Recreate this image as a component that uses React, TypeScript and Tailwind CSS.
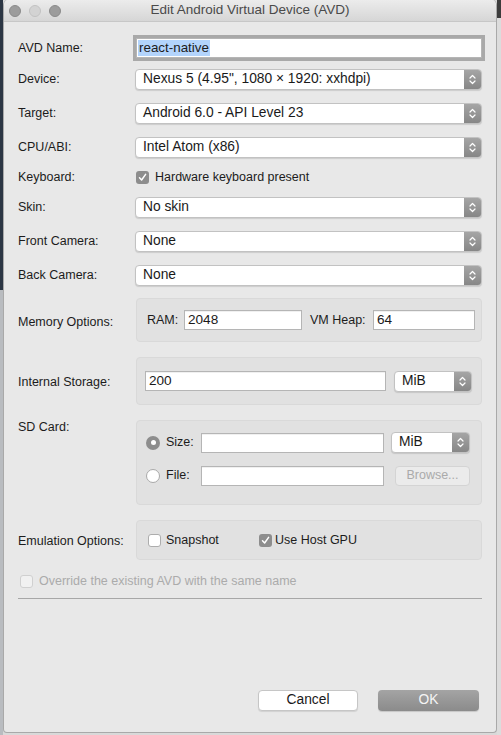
import React from "react";

const font = { fontFamily: '"Liberation Sans", Arial, sans-serif' };

function Chevrons() {
  return (
    <svg width="9" height="13" viewBox="0 0 9 13" fill="none">
      <path d="M2 5 L4.5 2.5 L7 5" stroke="white" strokeWidth="1.2" strokeLinecap="round" strokeLinejoin="round" />
      <path d="M2 8 L4.5 10.5 L7 8" stroke="white" strokeWidth="1.2" strokeLinecap="round" strokeLinejoin="round" />
    </svg>
  );
}

function Select({ value, className }: { value: string; className: string }) {
  return (
    <div
      className={`flex h-[21px] items-stretch rounded-[4px] border border-[#c2c2c2] bg-white shadow-[0_1px_1px_rgba(0,0,0,0.12)] ${className}`}
    >
      <span className="flex flex-1 items-center truncate pl-[7px] text-[13.8px] text-[#1a1a1a]">{value}</span>
      <span className="flex w-[17px] items-center justify-center rounded-r-[3px] bg-gradient-to-b from-[#a5a5a5] to-[#878787]">
        <Chevrons />
      </span>
    </div>
  );
}

function Input({ value, className }: { value?: string; className: string }) {
  return (
    <div
      className={`flex h-[20px] items-center border border-[#b5b5b5] bg-white pl-[3px] text-[13.6px] text-[#1a1a1a] shadow-[inset_0_1px_0_rgba(0,0,0,0.06)] ${className}`}
    >
      {value}
    </div>
  );
}

function Check({ checked, disabled }: { checked?: boolean; disabled?: boolean }) {
  if (checked) {
    return (
      <span className="flex h-[13px] w-[13px] items-center justify-center rounded-[3px] bg-[#8d8d8d]">
        <svg width="9" height="9" viewBox="0 0 9 9" fill="none">
          <path d="M1.5 4.8 L3.6 7 L7.6 1.4" stroke="white" strokeWidth="1.5" strokeLinecap="round" strokeLinejoin="round" />
        </svg>
      </span>
    );
  }
  return (
    <span
      className={`h-[13px] w-[13px] rounded-[3px] border ${
        disabled ? "border-[#d0d0d0] bg-[#f1f1f1]" : "border-[#adadad] bg-white"
      }`}
    />
  );
}

function Radio({ checked }: { checked?: boolean }) {
  if (checked) {
    return (
      <span className="flex h-[14px] w-[14px] items-center justify-center rounded-full bg-[#8d8d8d]">
        <span className="h-[5px] w-[5px] rounded-full bg-white" />
      </span>
    );
  }
  return <span className="h-[14px] w-[14px] rounded-full border border-[#a9a9a9] bg-white" />;
}

function Row({ label, h, children }: { label: string; h: string; children: React.ReactNode }) {
  return (
    <div className={`flex items-center ${h}`}>
      <div className="w-[117px] shrink-0">{label}</div>
      {children}
    </div>
  );
}

export default function App() {
  return (
    <div className="flex h-[735px] w-[501px] bg-[#d9d9d9] text-[12.5px] text-[#1c1c1c]" style={font}>
      <div className="flex w-[3px] flex-col">
        <div className="h-[290px] bg-[#2c3644]" />
        <div className="flex-1 bg-[#b9bcc0]" />
      </div>
      <div className="flex h-[733px] w-[494px] flex-col overflow-hidden rounded-t-[5px] rounded-b-[4px] border-x border-b border-[#a9a9a9] bg-[#e8e8e8]">
        <div className="relative flex h-[22px] shrink-0 items-center justify-center border-b border-[#c7c7c7] bg-gradient-to-b from-[#ececec] to-[#d6d6d6]">
          <div className="absolute left-[5px] top-[5px] flex gap-[8px]">
            <span className="h-[12px] w-[12px] rounded-full border border-[#8a8a8a] bg-[#9c9c9c]" />
            <span className="h-[12px] w-[12px] rounded-full border border-[#c2c2c2] bg-[#d3d3d3]" />
            <span className="h-[12px] w-[12px] rounded-full border border-[#8a8a8a] bg-[#9c9c9c]" />
          </div>
          <span className="text-[13.5px] text-[#4a4a4a]">Edit Android Virtual Device (AVD)</span>
        </div>

        <div className="flex flex-1 flex-col px-[14px] pt-[12px]">
          <Row label="AVD Name:" h="h-[28px]">
            <div className="ml-[1px] flex h-[20px] w-[347px] items-center border border-[#b5b5b5] bg-white pl-[1px] text-[13.4px] shadow-[0_0_0_3px_#a9a9a9]">
              <span className="bg-[#b3d4fc] px-[1px] leading-[16px]">react-native</span>
            </div>
          </Row>
          <Row label="Device:" h="h-[34px]">
            <Select value={'Nexus 5 (4.95", 1080 \u00d7 1920: xxhdpi)'} className="w-[349px]" />
          </Row>
          <Row label="Target:" h="h-[34px]">
            <Select value="Android 6.0 - API Level 23" className="w-[349px]" />
          </Row>
          <Row label="CPU/ABI:" h="h-[34px]">
            <Select value="Intel Atom (x86)" className="w-[349px]" />
          </Row>
          <Row label="Keyboard:" h="h-[26px]">
            <div className="flex items-center gap-[6px] pl-[1px]">
              <Check checked />
              <span>Hardware keyboard present</span>
            </div>
          </Row>
          <Row label="Skin:" h="h-[34px]">
            <Select value="No skin" className="w-[349px]" />
          </Row>
          <Row label="Front Camera:" h="h-[34px]">
            <Select value="None" className="w-[349px]" />
          </Row>
          <Row label="Back Camera:" h="h-[34px]">
            <Select value="None" className="w-[349px]" />
          </Row>

          <div className="mt-[6px] flex items-center">
            <div className="w-[118px] shrink-0 pt-[5px]">Memory Options:</div>
            <div className="flex h-[44px] w-[348px] items-center rounded-[4px] border border-[#d9d9d9] bg-[#e1e1e1] pl-[10px]">
              <span className="w-[37px]">RAM:</span>
              <Input value="2048" className="w-[118px]" />
              <span className="ml-[8px] w-[63px]">VM Heap:</span>
              <Input value="64" className="w-[102px]" />
            </div>
          </div>

          <div className="mt-[15px] flex items-center">
            <div className="w-[118px] shrink-0 pt-[2px]">Internal Storage:</div>
            <div className="flex h-[48px] w-[348px] items-center rounded-[4px] border border-[#d9d9d9] bg-[#e1e1e1] pl-[8px]">
              <Input value="200" className="w-[241px]" />
              <Select value="MiB" className="ml-[8px] w-[78px]" />
            </div>
          </div>

          <div className="mt-[15px] flex items-start">
            <div className="-mt-[2px] w-[118px] shrink-0">SD Card:</div>
            <div className="flex h-[85px] w-[348px] flex-col rounded-[4px] border border-[#d9d9d9] bg-[#e1e1e1] pl-[9px] pt-[11px]">
              <div className="flex h-[21px] items-center">
                <Radio checked />
                <span className="ml-[6px] w-[35px]">Size:</span>
                <Input className="w-[183px]" />
                <Select value="MiB" className="ml-[7px] w-[79px]" />
              </div>
              <div className="mt-[12px] flex h-[21px] items-center">
                <Radio />
                <span className="ml-[6px] w-[35px]">File:</span>
                <Input className="w-[183px]" />
                <div className="ml-[11px] flex h-[20px] w-[75px] items-center justify-center rounded-[4px] border border-[#d4d4d4] bg-[#ebebeb] text-[#aaaaaa]">
                  Browse...
                </div>
              </div>
            </div>
          </div>

          <div className="mt-[15px] flex items-center">
            <div className="w-[118px] shrink-0 pt-[2px]">Emulation Options:</div>
            <div className="flex h-[40px] w-[348px] items-center rounded-[4px] border border-[#d9d9d9] bg-[#e1e1e1] pl-[11px]">
              <Check />
              <span className="ml-[5px] w-[93px]">Snapshot</span>
              <Check checked />
              <span className="ml-[3px]">Use Host GPU</span>
            </div>
          </div>

          <div className="mt-[11px] flex h-[20px] items-center gap-[6px] pl-[2px] text-[#ababab]">
            <Check disabled />
            <span>Override the existing AVD with the same name</span>
          </div>

          <div className="mt-[7px] h-px bg-[#a7a7a7]" />

          <div className="mt-[91px] flex justify-end gap-[20px] pr-[3px]">
            <div className="flex h-[21px] w-[100px] items-center justify-center rounded-[4px] border border-[#c6c6c6] bg-white text-[13.8px] text-[#1a1a1a] shadow-[0_1px_1px_rgba(0,0,0,0.1)]">
              Cancel
            </div>
            <div className="flex h-[21px] w-[101px] items-center justify-center rounded-[4px] bg-gradient-to-b from-[#a4a4a4] to-[#8b8b8b] text-[13.8px] text-[#f4f4f4] shadow-[0_1px_1px_rgba(0,0,0,0.15)]">
              OK
            </div>
          </div>
        </div>
      </div>
      <div className="flex w-[4px] flex-col">
        <div className="h-[18px] bg-[#3c3c3c]" />
        <div className="flex-1 bg-[#dcdcdc]" />
      </div>
    </div>
  );
}
